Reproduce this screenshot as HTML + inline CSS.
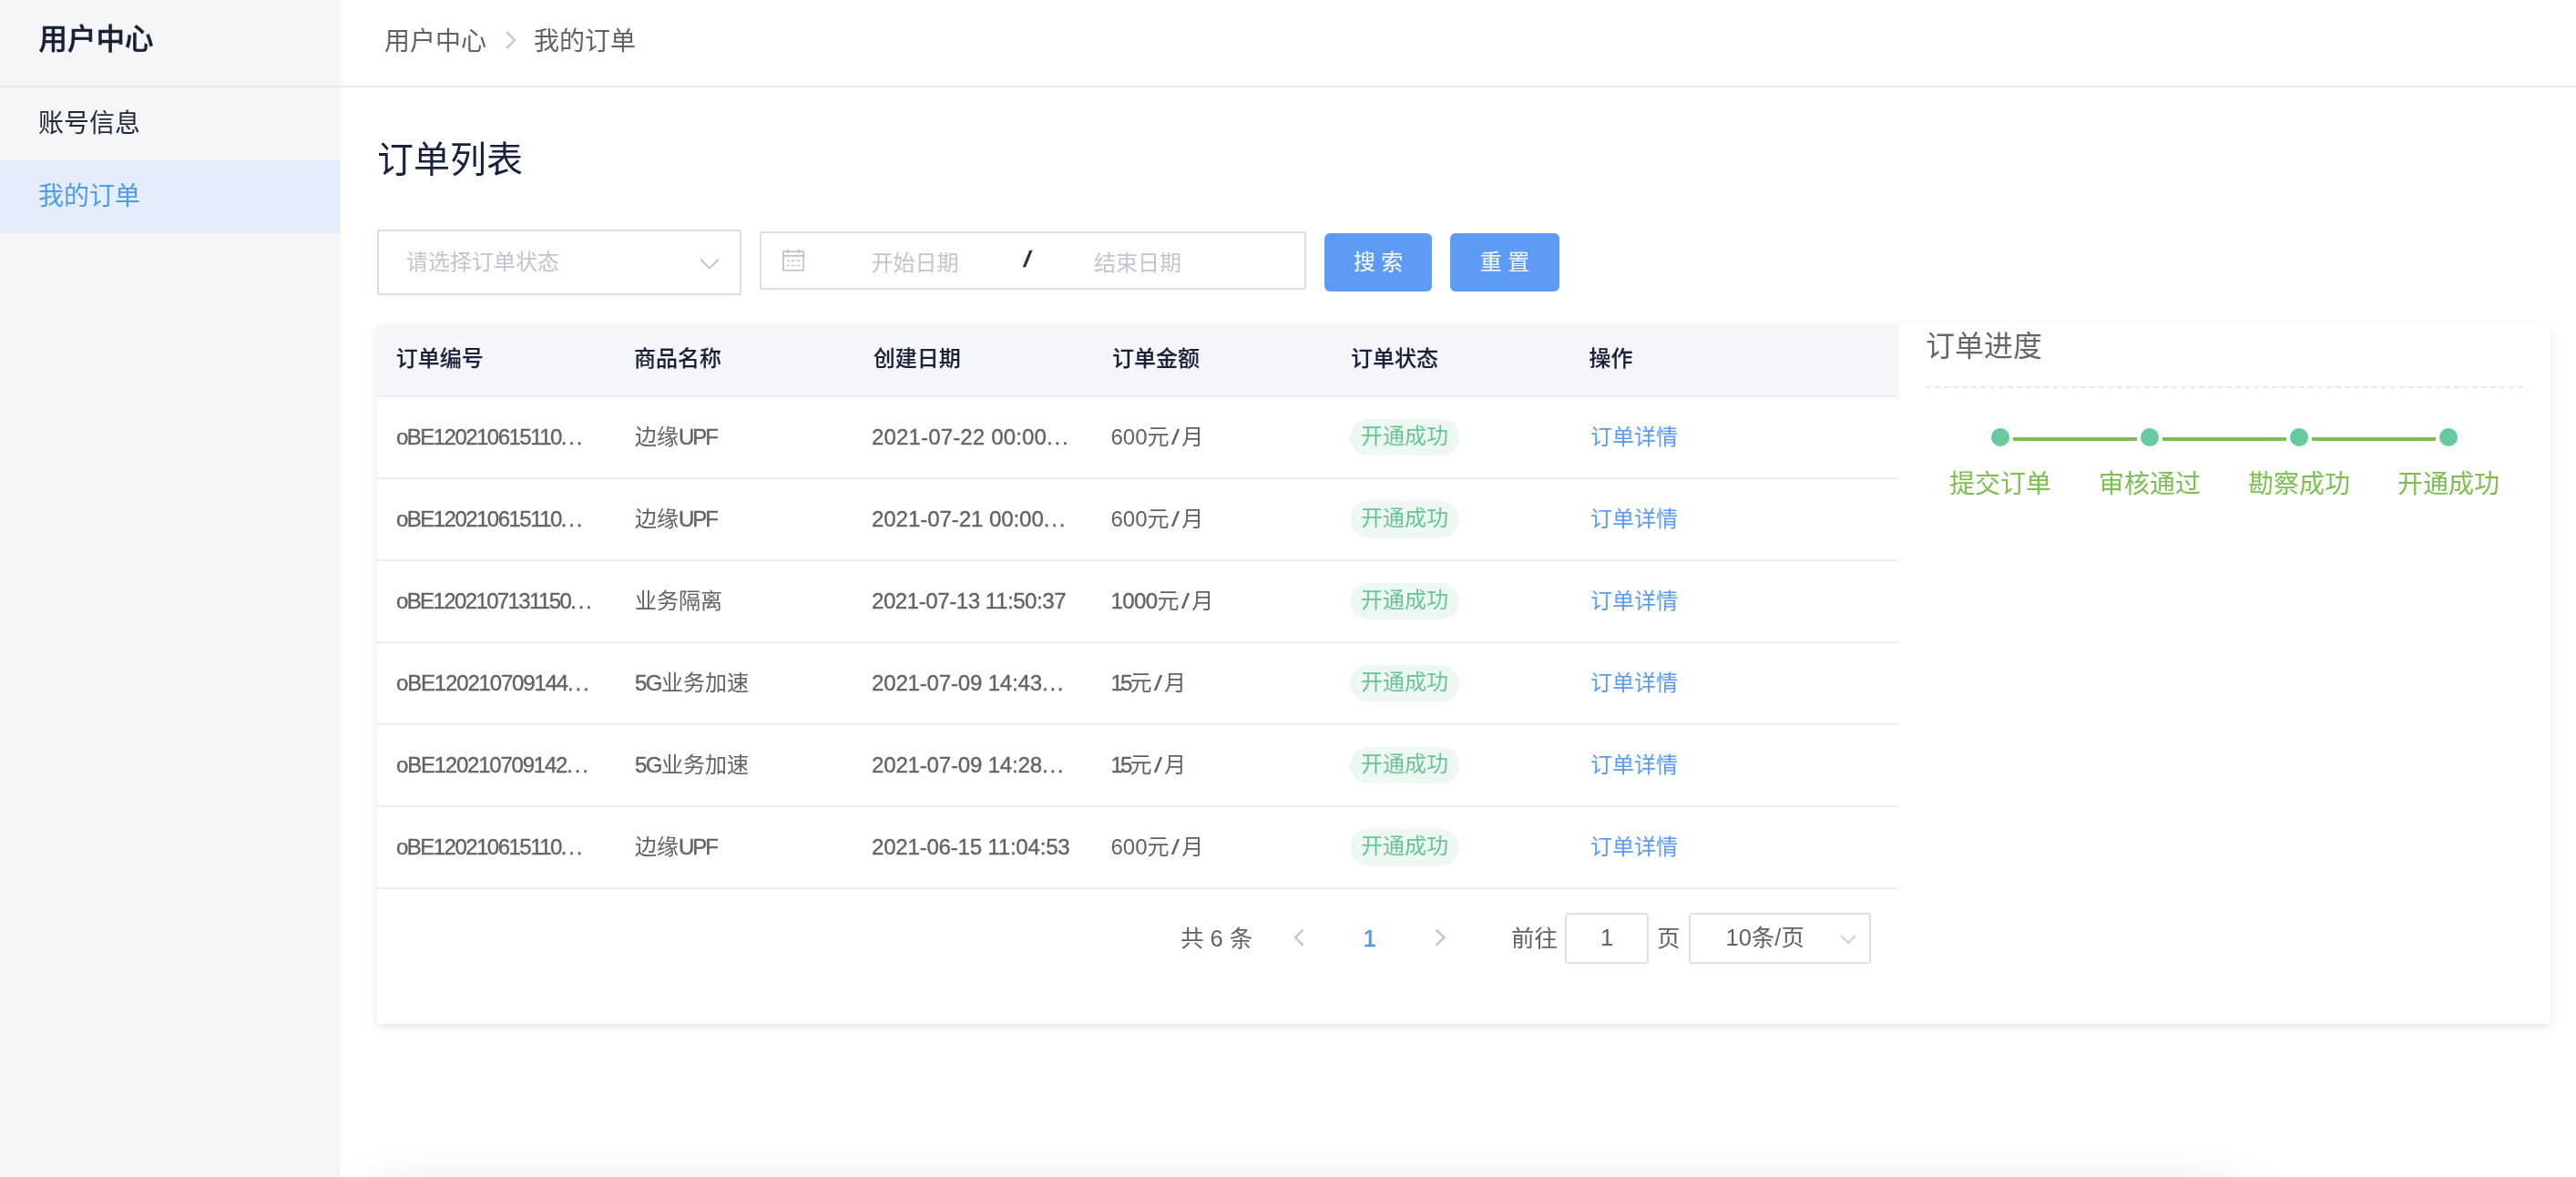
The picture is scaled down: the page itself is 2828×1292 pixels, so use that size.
<!DOCTYPE html>
<html lang="zh-CN">
<head>
<meta charset="utf-8">
<title>用户中心 - 我的订单</title>
<style>
*{box-sizing:border-box;margin:0;padding:0}
html,body{width:2828px;height:1292px;overflow:hidden;background:#fff}
body{position:relative;font-family:"Liberation Sans","Noto Sans CJK SC",sans-serif;color:#606266;-webkit-font-smoothing:antialiased}
.app{position:absolute;left:0;top:0;width:2828px;height:1292px;overflow:hidden;will-change:transform}
/* sidebar */
.side{position:absolute;left:0;top:0;width:374px;height:1292px;background:#f5f6f8}
.side .ttl{position:absolute;left:42.5px;top:0;height:94px;line-height:87px;font-size:31.5px;font-weight:500;-webkit-text-stroke:.5px #172036;color:#172036}
.side .line{position:absolute;left:0;top:94px;width:374px;height:2px;background:#e9e9e9}
.side .it{position:absolute;left:0;width:374px;height:80px;line-height:80px;padding-left:42px;font-size:28px;color:#1f2739}
.side .it.on{background:#e5edfa;color:#4e9bf4}
/* header */
.hd{position:absolute;left:374px;top:0;width:2454px;height:96px;border-bottom:2px solid #e7e9ed;background:#fff}
.hd span{position:absolute;top:0;line-height:92px;font-size:28px;color:#606266;white-space:nowrap}
.hd svg{position:absolute;left:180px;top:32.5px}
h1{position:absolute;left:414px;top:145px;font-size:40px;line-height:60px;font-weight:400;color:#18213a;white-space:nowrap}
/* filters */
.sel{position:absolute;left:414px;top:252px;width:400px;height:72px;border:2px solid #dadde5;border-radius:2px;background:#fff}
.sel span{position:absolute;left:30px;top:0;line-height:68px;font-size:24px;color:#c0c4cc;white-space:nowrap}
.sel svg{position:absolute;right:20px;top:27.5px}
.dr{position:absolute;left:834px;top:254px;width:600px;height:64px;border:2px solid #dadde5;border-radius:2px;background:#fff}
.dr span{position:absolute;top:0;line-height:66px;font-size:24px;color:#c0c4cc;white-space:nowrap}
.dr .sep{color:#303133}
.dr svg{position:absolute;left:22px;top:17px}
.btn{position:absolute;top:256px;height:64px;border-radius:6px;background:#5c9cf7;color:#fff;font-size:24px;line-height:64px;text-align:center;white-space:pre}
/* card */
.card{position:absolute;left:414px;top:356px;width:2386px;height:768px;background:#fff;box-shadow:0 4px 10px -1px rgba(70,80,100,.16)}
.tb{position:absolute;left:0;top:0;width:1670px}
.tr{position:relative;height:90px;border-bottom:2px solid #ebedf3}
.tr.th{height:80px;background:#f5f6f9;font-weight:500;-webkit-text-stroke:.12px #172036;color:#172036}
.tr>div{position:absolute;top:0;height:88px;line-height:88px;font-size:24px;white-space:nowrap}
.tr.th>div{height:78px;line-height:76px}
.c1{left:21px}.c2{left:283px}.c3{left:543px}.c4{left:805.5px}.c5{left:1068px}.c6{left:1332px}
.th .c1{left:20.8px}.th .c2{left:282px}.th .c3{left:544.7px}.th .c4{left:807px}.th .c5{left:1069px}.th .c6{left:1330.5px}
i{font-style:normal}.tr i{-webkit-text-stroke:.35px #606266}i.d{letter-spacing:1.8px}.tr i.sl{display:inline-block;margin:0 3.5px;transform:scaleX(1.4);-webkit-text-stroke:0}
.tag{display:inline-block;vertical-align:top;margin-top:24px;width:120px;height:40px;line-height:38px;border-radius:20px;background:#eef8f3;color:#66c592;text-align:center;font-size:24px}
.lk{color:#5a9cf6}
/* pagination */
.pg{position:absolute;left:0;top:620px;width:1670px;height:110px;font-size:25.5px;color:#606266}
.pg span{position:absolute;top:27.5px;line-height:52px;white-space:nowrap}
.pg .bx{position:absolute;top:26px;height:56px;border:2px solid #dcdfe6;border-radius:4px;text-align:center;line-height:51px;color:#606266}
.pg svg{position:absolute}
/* progress panel */
.pp{position:absolute;left:1700px;top:0;width:656px;height:300px}
.pp .t{position:absolute;left:0;top:1.5px;font-size:32px;line-height:44px;color:#666;white-space:nowrap}
.pp .dash{position:absolute;left:0;top:68px;width:656px;height:0;border-top:2px dashed #e8e8e8}
.pp .dot{position:absolute;top:114px;width:20px;height:20px;border-radius:50%;background:#67c99e}
.pp .ln{position:absolute;top:124px;width:136px;height:4px;background:#7abf4f}
.pp .lb{position:absolute;top:154px;width:164px;text-align:center;font-size:28px;line-height:44px;color:#7abf4f;white-space:nowrap}
.foot{position:absolute;left:410px;top:1322px;width:2045px;height:100px;box-shadow:0 0 70px rgba(0,0,0,.2);z-index:5}
</style>
</head>
<body>
<div class="app">
<div class="side">
  <div class="ttl">用户中心</div>
  <div class="line"></div>
  <div class="it" style="top:96px">账号信息</div>
  <div class="it on" style="top:176px">我的订单</div>
</div>
<div class="hd">
  <span style="left:48px">用户中心</span>
  <svg width="14" height="22" viewBox="0 0 14 22"><path d="M2 2l9 9-9 9" fill="none" stroke="#c0c4cc" stroke-width="2"/></svg>
  <span style="left:212px">我的订单</span>
</div>
<h1>订单列表</h1>

<div class="sel"><span>请选择订单状态</span>
  <svg width="26" height="16" viewBox="0 0 26 16"><path d="M3.7 3.2l9.3 9.4 9.3-9.4" fill="none" stroke="#bcc0ca" stroke-width="1.8" stroke-linecap="round" stroke-linejoin="round"/></svg>
</div>
<div class="dr">
  <svg width="26" height="26" viewBox="0 0 26 26" fill="none" stroke="#bec1cc" stroke-width="1.7"><rect x="1.9" y="3.1" width="22.2" height="20.7"/><path d="M1.9 7.8h22.2M6.9 .4v4.8M19.1 .4v4.8"/><path stroke-width="1.4" stroke-linecap="round" d="M6.5 13.3h2.2M11.8 13.3h2.2M17.2 13.3h2.2M6.5 18.6h2.2M11.8 18.6h2.2M17.2 18.6h2.2"/></svg>
  <span style="left:120.5px">开始日期</span>
  <span class="sep" style="left:289px;font-size:23px;line-height:59px;transform:scaleX(1.6);-webkit-text-stroke:.3px #303133">/</span>
  <span style="left:365px">结束日期</span>
</div>
<div class="btn" style="left:1454px;width:118px">搜 索</div>
<div class="btn" style="left:1592px;width:120px">重 置</div>

<div class="card">
  <div class="tb">
    <div class="tr th"><div class="c1">订单编号</div><div class="c2">商品名称</div><div class="c3">创建日期</div><div class="c4">订单金额</div><div class="c5">订单状态</div><div class="c6">操作</div></div>
    <div class="tr"><div class="c1"><i style="letter-spacing:-1.53px">oBE120210615110</i><i class="d">...</i></div><div class="c2">边缘<i style="letter-spacing:-2px">UPF</i></div><div class="c3"><i style="letter-spacing:0.16px">2021-07-22 00:00</i><i class="d">...</i></div><div class="c4">600元<i class="sl">/</i>月</div><div class="c5"><span class="tag">开通成功</span></div><div class="c6 lk">订单详情</div></div>
    <div class="tr"><div class="c1"><i style="letter-spacing:-1.53px">oBE120210615110</i><i class="d">...</i></div><div class="c2">边缘<i style="letter-spacing:-2px">UPF</i></div><div class="c3"><i style="letter-spacing:-0.05px">2021-07-21 00:00</i><i class="d">...</i></div><div class="c4">600元<i class="sl">/</i>月</div><div class="c5"><span class="tag">开通成功</span></div><div class="c6 lk">订单详情</div></div>
    <div class="tr"><div class="c1"><i style="letter-spacing:-1.62px">oBE1202107131150</i><i class="d">...</i></div><div class="c2">业务隔离</div><div class="c3"><i style="letter-spacing:-0.42px">2021-07-13 11:50:37</i></div><div class="c4"><i style="letter-spacing:-0.6px">1000</i>元<i class="sl">/</i>月</div><div class="c5"><span class="tag">开通成功</span></div><div class="c6 lk">订单详情</div></div>
    <div class="tr"><div class="c1"><i style="letter-spacing:-1.17px">oBE120210709144</i><i class="d">...</i></div><div class="c2"><i style="letter-spacing:-1.5px">5G</i>业务加速</div><div class="c3"><i style="letter-spacing:-0.16px">2021-07-09 14:43</i><i class="d">...</i></div><div class="c4"><i style="letter-spacing:-2.9px">15</i>元<i class="sl">/</i>月</div><div class="c5"><span class="tag">开通成功</span></div><div class="c6 lk">订单详情</div></div>
    <div class="tr"><div class="c1"><i style="letter-spacing:-1.22px">oBE120210709142</i><i class="d">...</i></div><div class="c2"><i style="letter-spacing:-1.5px">5G</i>业务加速</div><div class="c3"><i style="letter-spacing:-0.16px">2021-07-09 14:28</i><i class="d">...</i></div><div class="c4"><i style="letter-spacing:-2.9px">15</i>元<i class="sl">/</i>月</div><div class="c5"><span class="tag">开通成功</span></div><div class="c6 lk">订单详情</div></div>
    <div class="tr"><div class="c1"><i style="letter-spacing:-1.53px">oBE120210615110</i><i class="d">...</i></div><div class="c2">边缘<i style="letter-spacing:-2px">UPF</i></div><div class="c3"><i style="letter-spacing:-0.19px">2021-06-15 11:04:53</i></div><div class="c4">600元<i class="sl">/</i>月</div><div class="c5"><span class="tag">开通成功</span></div><div class="c6 lk">订单详情</div></div>
  </div>
  <div class="pg">
    <span style="left:882px">共 6 条</span>
    <svg style="left:1005px;top:43px" width="14" height="22" viewBox="0 0 14 22"><path d="M11.2 2.2l-8.4 8 8.4 8" fill="none" stroke="#c0c4cc" stroke-width="2.3" stroke-linecap="round" stroke-linejoin="round"/></svg>
    <span style="left:1082.5px;color:#4d96f0;-webkit-text-stroke:.5px #4d96f0;font-size:26px;top:27.5px">1</span>
    <svg style="left:1160px;top:43px" width="14" height="22" viewBox="0 0 14 22"><path d="M3.2 2.2l8.4 8-8.4 8" fill="none" stroke="#c0c4cc" stroke-width="2.3" stroke-linecap="round" stroke-linejoin="round"/></svg>
    <span style="left:1245px">前往</span>
    <div class="bx" style="left:1304px;width:92px">1</div>
    <span style="left:1405px">页</span>
    <div class="bx" style="left:1440px;width:200px;text-align:left;padding-left:38.5px">10条/页</div>
    <svg style="left:1605px;top:49px" width="20" height="12" viewBox="0 0 20 12"><path d="M2 2l8 8 8-8" fill="none" stroke="#c0c4cc" stroke-width="1.6"/></svg>
  </div>
  <div class="pp">
    <div class="t">订单进度</div>
    <div class="dash"></div>
    <div class="dot" style="left:72px"></div><div class="ln" style="left:96px"></div>
    <div class="dot" style="left:236px"></div><div class="ln" style="left:260px"></div>
    <div class="dot" style="left:400px"></div><div class="ln" style="left:424px"></div>
    <div class="dot" style="left:564px"></div>
    <div class="lb" style="left:0">提交订单</div>
    <div class="lb" style="left:164px">审核通过</div>
    <div class="lb" style="left:328px">勘察成功</div>
    <div class="lb" style="left:492px">开通成功</div>
  </div>
</div>
<div class="foot"></div>
</div>
</body>
</html>
